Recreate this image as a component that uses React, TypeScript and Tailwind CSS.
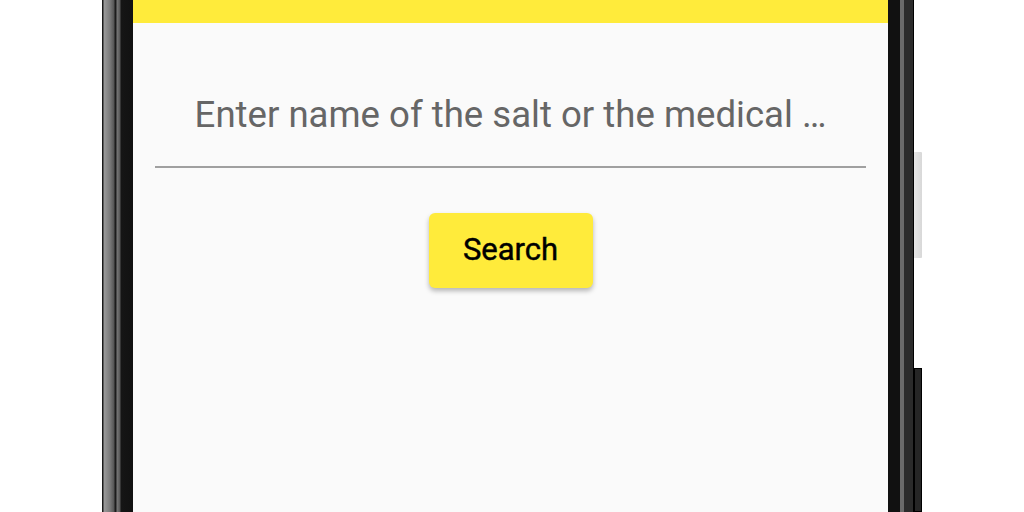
export default function App() {
  return (
    <div className="flex h-[512px] w-[1024px] overflow-hidden bg-white pl-[102px] font-['Roboto',sans-serif]">
      {/* left bezel */}
      <div className="h-full w-[31px] bg-[linear-gradient(to_right,#1a1a1a_0px,#1a1a1a_1px,#9a9a9a_2px,#7a7a7a_8px,#555_12px,#1c1c1c_13px,#1c1c1c_14px,#777_15px,#555_18px,#151515_19px,#111_31px)]" />

      {/* screen */}
      <div className="flex h-full w-[755px] flex-col bg-[#fafafa]">
        <div className="h-[23px] w-full bg-[#ffeb3b]" />
        <div className="mx-[22px] mt-[67px] flex flex-col">
          <div className="text-center text-[36.6px] leading-[50px] text-[#666666] whitespace-nowrap">
            Enter name of the salt or the medical …
          </div>
          <div className="mt-[26px] h-[2px] w-full bg-[#a0a0a0]" />
        </div>
        <div className="mt-[45px] flex justify-center">
          <button className="h-[75px] w-[164px] rounded-[6px] bg-[#ffeb3b] text-[31px] font-normal text-black shadow-[0_3px_5px_rgba(0,0,0,0.28)] [-webkit-text-stroke:0.45px_black]">
            Search
          </button>
        </div>
      </div>

      {/* right bezel */}
      <div className="h-full w-[26px] bg-[linear-gradient(to_right,#111_0px,#111_12px,#6a6a6a_12px,#6a6a6a_16px,#2b2b2b_16px,#2b2b2b_25px,#000_25px)]" />

      {/* side buttons */}
      <div className="flex h-full w-[8px] flex-col">
        <div className="mt-[152px] h-[106px] w-full rounded-r-[1px] bg-[linear-gradient(to_right,#e6e6e6,#d8d8d8)]" />
        <div className="mt-[110px] w-full flex-1 border border-black bg-[#262626]" />
      </div>
    </div>
  );
}
